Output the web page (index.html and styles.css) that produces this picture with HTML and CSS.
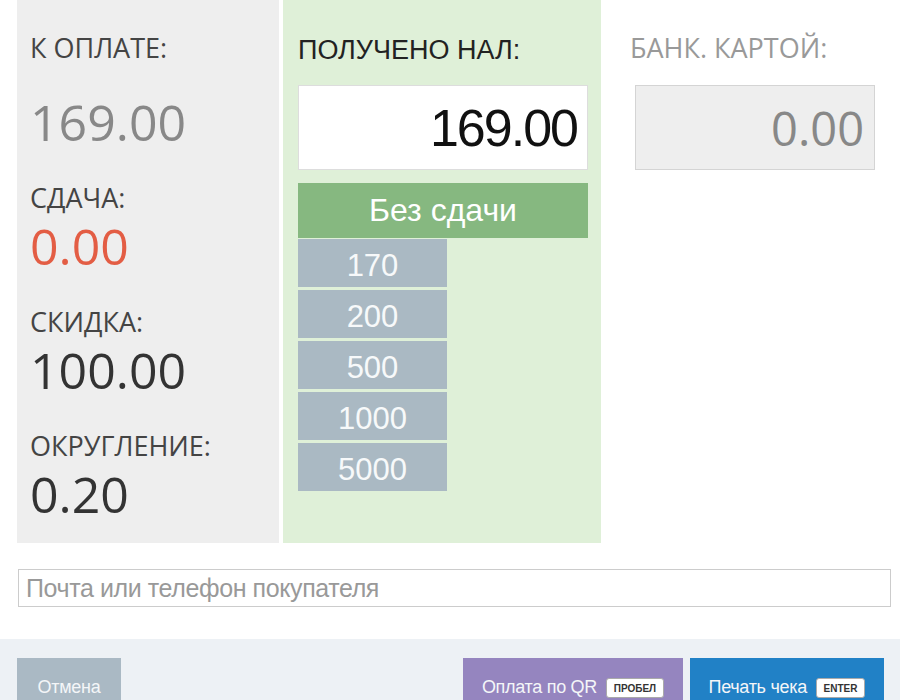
FILE: index.html
```html
<!DOCTYPE html>
<html lang="ru">

<head>
  <meta charset="UTF-8" />
  <meta name="viewport" content="width=device-width, initial-scale=1.0" />
  <title>Оплата</title>
  <link rel="stylesheet" href="styles.css">
</head>

<body>
  <div class="pay">
    <div class="col col-summary">
      <div class="stat stat-total">
        <div class="stat-label">К ОПЛАТЕ:</div>
        <div class="stat-value muted">169.00</div>
      </div>
      <div class="stat">
        <div class="stat-label">СДАЧА:</div>
        <div class="stat-value change">0.00</div>
      </div>
      <div class="stat">
        <div class="stat-label">СКИДКА:</div>
        <div class="stat-value">100.00</div>
      </div>
      <div class="stat">
        <div class="stat-label">ОКРУГЛЕНИЕ:</div>
        <div class="stat-value">0.20</div>
      </div>
    </div>

    <div class="col col-cash">
      <div class="cash-label">ПОЛУЧЕНО НАЛ:</div>
      <input class="cash-input" type="text" value="169.00">
      <button class="btn-exact">Без сдачи</button>
      <div class="bills">
        <button class="bill">170</button>
        <button class="bill">200</button>
        <button class="bill">500</button>
        <button class="bill">1000</button>
        <button class="bill">5000</button>
      </div>
    </div>

    <div class="col col-card">
      <div class="card-label">БАНК. КАРТОЙ:</div>
      <input class="card-input" type="text" value="0.00" disabled>
    </div>
  </div>

  <div class="contact">
    <input class="contact-input" type="text" placeholder="Почта или телефон покупателя">
  </div>

  <div class="footer">
    <button class="btn btn-cancel">Отмена</button>
    <div class="footer-actions">
      <button class="btn btn-qr">Оплата по QR <kbd>пробел</kbd></button>
      <button class="btn btn-print">Печать чека <kbd>enter</kbd></button>
    </div>
  </div>
</body>

</html>
```

FILE: styles.css
```css
:root {
  --panel-gray: #eeeeee;
  --panel-green: #dff0d8;
  --green: #86b880;
  --bill: #aab9c3;
  --footer-bg: #edf1f5;
}

* {
  box-sizing: border-box;
  margin: 0;
  padding: 0;
}

body {
  font-family: "Open Sans", sans-serif;
  background: #ffffff;
  color: #444444;
  width: 900px;
  height: 700px;
  overflow: hidden;
}

button,
input {
  font: inherit;
  border: none;
  outline: none;
}

/* верхняя часть */
.pay {
  display: flex;
  gap: 4px;
  padding-left: 17px;
}

.col-summary {
  width: 262px;
  height: 543px;
  background: var(--panel-gray);
  padding: 33px 0 0 13px;
}

.stat {
  margin-top: 33px;
}

.stat-total {
  margin-top: 0;
}

.stat-label {
  font-size: 27px;
  line-height: 30px;
  font-weight: 500;
  color: #444444;
}

.stat-value {
  font-size: 50px;
  line-height: 56px;
  font-weight: 500;
  color: #333333;
  margin-top: 5px;
}

.stat-total .stat-value {
  margin-top: 31px;
}

.stat-value.muted {
  color: #888888;
}

.stat-value.change {
  color: #e35d44;
}

.col-cash {
  width: 318px;
  height: 543px;
  background: var(--panel-green);
  padding: 35px 0 0 15px;
  font-family: "Liberation Sans", Arial, sans-serif;
}

.cash-label {
  font-size: 27px;
  line-height: 30px;
  color: #222222;
}

.cash-input {
  display: block;
  width: 290px;
  height: 85px;
  margin-top: 20px;
  border: 1px solid #dddddd;
  background: #ffffff;
  padding: 0 10px;
  text-align: right;
  font-family: "Liberation Sans", Arial, sans-serif;
  font-size: 52px;
  letter-spacing: -2px;
  color: #111111;
}

.btn-exact {
  display: block;
  width: 290px;
  height: 55px;
  margin-top: 13px;
  margin-bottom: 1px;
  background: var(--green);
  color: #ffffff;
  font-size: 32px;
  cursor: pointer;
}

.bills {
  display: flex;
  flex-direction: column;
  gap: 3px;
}

.bill {
  width: 149px;
  height: 48px;
  padding-top: 5px;
  background: var(--bill);
  color: #f7f9fa;
  font-size: 31px;
  cursor: pointer;
}

.col-card {
  padding: 33px 0 0 25px;
}

.card-label {
  font-size: 27px;
  line-height: 30px;
  font-weight: 500;
  color: #999999;
}

.card-input {
  display: block;
  width: 240px;
  height: 85px;
  margin: 22px 0 0 5px;
  background: #eeeeee;
  border: 1px solid #d4d4d4;
  padding: 0 10px;
  text-align: right;
  font-family: "Open Sans", sans-serif;
  font-size: 47px;
  font-weight: 500;
  color: #888888;
}

/* контакт покупателя */
.contact {
  padding: 26px 9px 0 18px;
}

.contact-input {
  display: block;
  width: 100%;
  height: 38px;
  border: 1px solid #cccccc;
  padding: 0 7px;
  font-family: "Liberation Sans", Arial, sans-serif;
  font-size: 25px;
  letter-spacing: -0.4px;
  color: #333333;
}

.contact-input::placeholder {
  color: #999999;
}

/* нижняя панель */
.footer {
  display: flex;
  justify-content: space-between;
  margin-top: 32px;
  height: 61px;
  background: var(--footer-bg);
  padding: 19px 16px 0 17px;
}

.footer-actions {
  display: flex;
  gap: 7px;
}

.btn {
  height: 58px;
  font-family: "Liberation Sans", Arial, sans-serif;
  font-size: 18px;
  letter-spacing: -0.3px;
  color: #f4f6f8;
  cursor: pointer;
}

.btn-cancel {
  width: 104px;
  background: #aab9c4;
}

.btn-qr {
  width: 220px;
  background: #9585bf;
}

.btn-print {
  width: 194px;
  background: #2181c6;
}

.btn kbd {
  display: inline-block;
  vertical-align: 1px;
  margin-left: 4px;
  padding: 4px 7px 3px;
  background: #ffffff;
  border: 1px solid #aaaaaa;
  border-radius: 3px;
  font-family: "Liberation Sans", Arial, sans-serif;
  font-size: 10px;
  font-weight: bold;
  letter-spacing: 0;
  line-height: 11px;
  color: #333333;
  text-transform: uppercase;
}
```
